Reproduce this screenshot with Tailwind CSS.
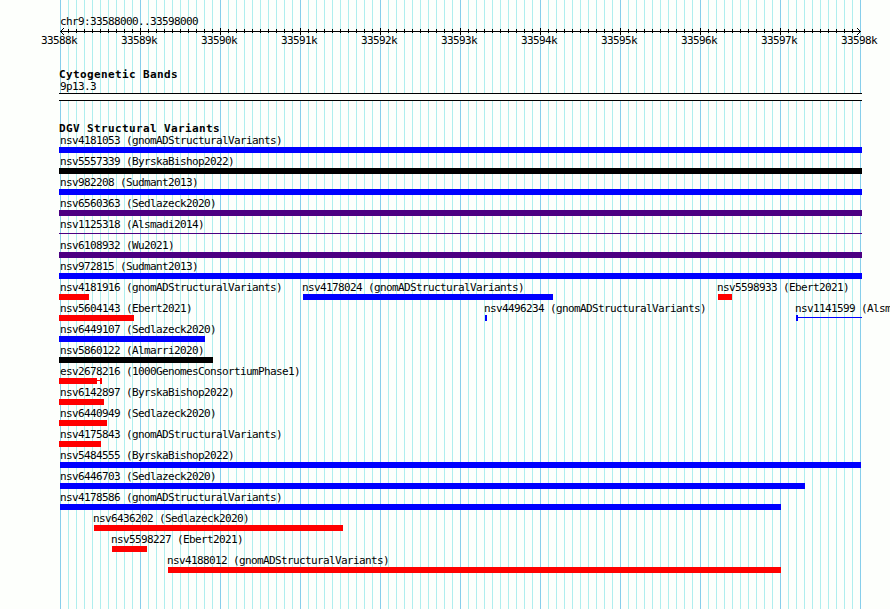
<!DOCTYPE html>
<html lang="en">
<head>
<meta charset="utf-8">
<title>chr9:33588000..33598000</title>
<script src="https://cdn.jsdelivr.net/npm/@tailwindcss/browser@4"></script>
</head>
<body class="bg-[#fdfffc]">
<main class="relative isolate w-[890px] h-[609px] overflow-hidden whitespace-nowrap text-black text-[11px] leading-[13px] tracking-[-0.622px] font-['DejaVu_Sans_Mono',monospace]">
  <div id="grid" class="absolute inset-y-0 left-[60px] -z-10 flex"></div>

  <header class="h-[67px] pt-[15px]">
    <h1 class="ml-[60px] h-[13px]">chr9:33588000..33598000</h1>
    <svg class="block ml-[60px] w-[801px] h-[7px]" viewBox="0 0 801 7" shape-rendering="crispEdges">
      <rect x="0" y="3" width="801" height="1"/>
      <g id="ticks"></g>
      <path d="M1 2h1v1h-1zM2 1h1v1h-1zM3 0h1v1h-1zM1 4h1v1h-1zM2 5h1v1h-1zM3 6h1v1h-1zM799 2h1v1h-1zM798 1h1v1h-1zM797 0h1v1h-1zM799 4h1v1h-1zM798 5h1v1h-1zM797 6h1v1h-1z"/>
    </svg>
    <div id="scale" class="flex ml-[41px] -mt-px w-[880px]"></div>
  </header>

  <section class="h-[54px] pt-px">
    <h2 class="ml-[59px] font-bold tracking-[0.378px] h-3">Cytogenetic Bands</h2>
    <p class="ml-[60px] h-[13px]">9p13.3</p>
    <div class="ml-[59px] w-[803px] h-2 border-y border-black bg-[#fdfffc]"></div>
  </section>

  <section>
    <h2 class="ml-[59px] pt-px h-[11px] font-bold tracking-[0.378px]">DGV Structural Variants</h2>
    <div id="tracks"></div>
  </section>
</main>
<script>
const grid = document.getElementById('grid');
const ticks = document.getElementById('ticks');
for (let i = 0; i <= 100; i++) {
  const major = i % 10 === 0;
  grid.insertAdjacentHTML('beforeend', `<div class="w-2 shrink-0 border-l ${major ? 'border-[#87ceeb]' : 'border-[#afeeee]'}"></div>`);
  if (i > 0 && i < 100) ticks.innerHTML += major
    ? `<rect x="${i * 8}" y="0" width="1" height="7"/>`
    : `<rect x="${i * 8}" y="1" width="1" height="4"/>`;
}
document.getElementById('scale').innerHTML = Array.from({length: 11}, (_, i) => `<span class="w-20 shrink-0">${33588 + i}k</span>`).join('');

const colors = {b: 'bg-[#0000ff]', r: 'bg-[#ff0000]', k: 'bg-black', i: 'bg-[#4b0082]'};
// Feature: [label x, label, [color, start, end, thin?], ...]
const rows = [
  [[60, 'nsv4181053 (gnomADStructuralVariants)', ['b', 59, 862]]],
  [[60, 'nsv5557339 (ByrskaBishop2022)', ['k', 59, 862]]],
  [[60, 'nsv982208 (Sudmant2013)', ['b', 59, 862]]],
  [[60, 'nsv6560363 (Sedlazeck2020)', ['i', 59, 862]]],
  [[60, 'nsv1125318 (Alsmadi2014)', ['i', 59, 862, 1]]],
  [[60, 'nsv6108932 (Wu2021)', ['i', 59, 862]]],
  [[60, 'nsv972815 (Sudmant2013)', ['b', 59, 862]]],
  [[60, 'nsv4181916 (gnomADStructuralVariants)', ['r', 59, 89]],
   [302, 'nsv4178024 (gnomADStructuralVariants)', ['b', 303, 553]],
   [717, 'nsv5598933 (Ebert2021)', ['r', 718, 732]]],
  [[60, 'nsv5604143 (Ebert2021)', ['r', 59, 134]],
   [484, 'nsv4496234 (gnomADStructuralVariants)', ['b', 485, 487]],
   [795, 'nsv1141599 (Alsmadi2014)', ['b', 796, 798], ['b', 798, 862, 1]]],
  [[60, 'nsv6449107 (Sedlazeck2020)', ['b', 59, 205]]],
  [[60, 'nsv5860122 (Almarri2020)', ['k', 59, 213]]],
  [[60, 'esv2678216 (1000GenomesConsortiumPhase1)', ['r', 59, 97], ['r', 97, 100, 1], ['r', 100, 102]]],
  [[60, 'nsv6142897 (ByrskaBishop2022)', ['r', 59, 104]]],
  [[60, 'nsv6440949 (Sedlazeck2020)', ['r', 59, 107]]],
  [[60, 'nsv4175843 (gnomADStructuralVariants)', ['r', 59, 101]]],
  [[60, 'nsv5484555 (ByrskaBishop2022)', ['b', 60, 861]]],
  [[60, 'nsv6446703 (Sedlazeck2020)', ['b', 60, 805]]],
  [[60, 'nsv4178586 (gnomADStructuralVariants)', ['b', 60, 781]]],
  [[93, 'nsv6436202 (Sedlazeck2020)', ['r', 94, 343]]],
  [[111, 'nsv5598227 (Ebert2021)', ['r', 112, 147]]],
  [[167, 'nsv4188012 (gnomADStructuralVariants)', ['r', 168, 781]]],
];
document.getElementById('tracks').innerHTML = rows.map(features =>
  `<div class="grid grid-cols-[890px] grid-rows-[15px_6px]">` + features.map(([x, label, ...parts]) =>
    `<span class="col-start-1 row-start-1 pt-[2px]" style="margin-left:${x}px">${label}</span>` +
    parts.map(([c, from, to, thin]) =>
      `<i class="col-start-1 row-start-2 ${thin ? 'mt-[2px] h-px' : 'h-[6px]'} ${colors[c]}" style="margin-left:${from}px;width:${to - from}px"></i>`
    ).join('')).join('') + `</div>`).join('');
</script>
</body>
</html>
